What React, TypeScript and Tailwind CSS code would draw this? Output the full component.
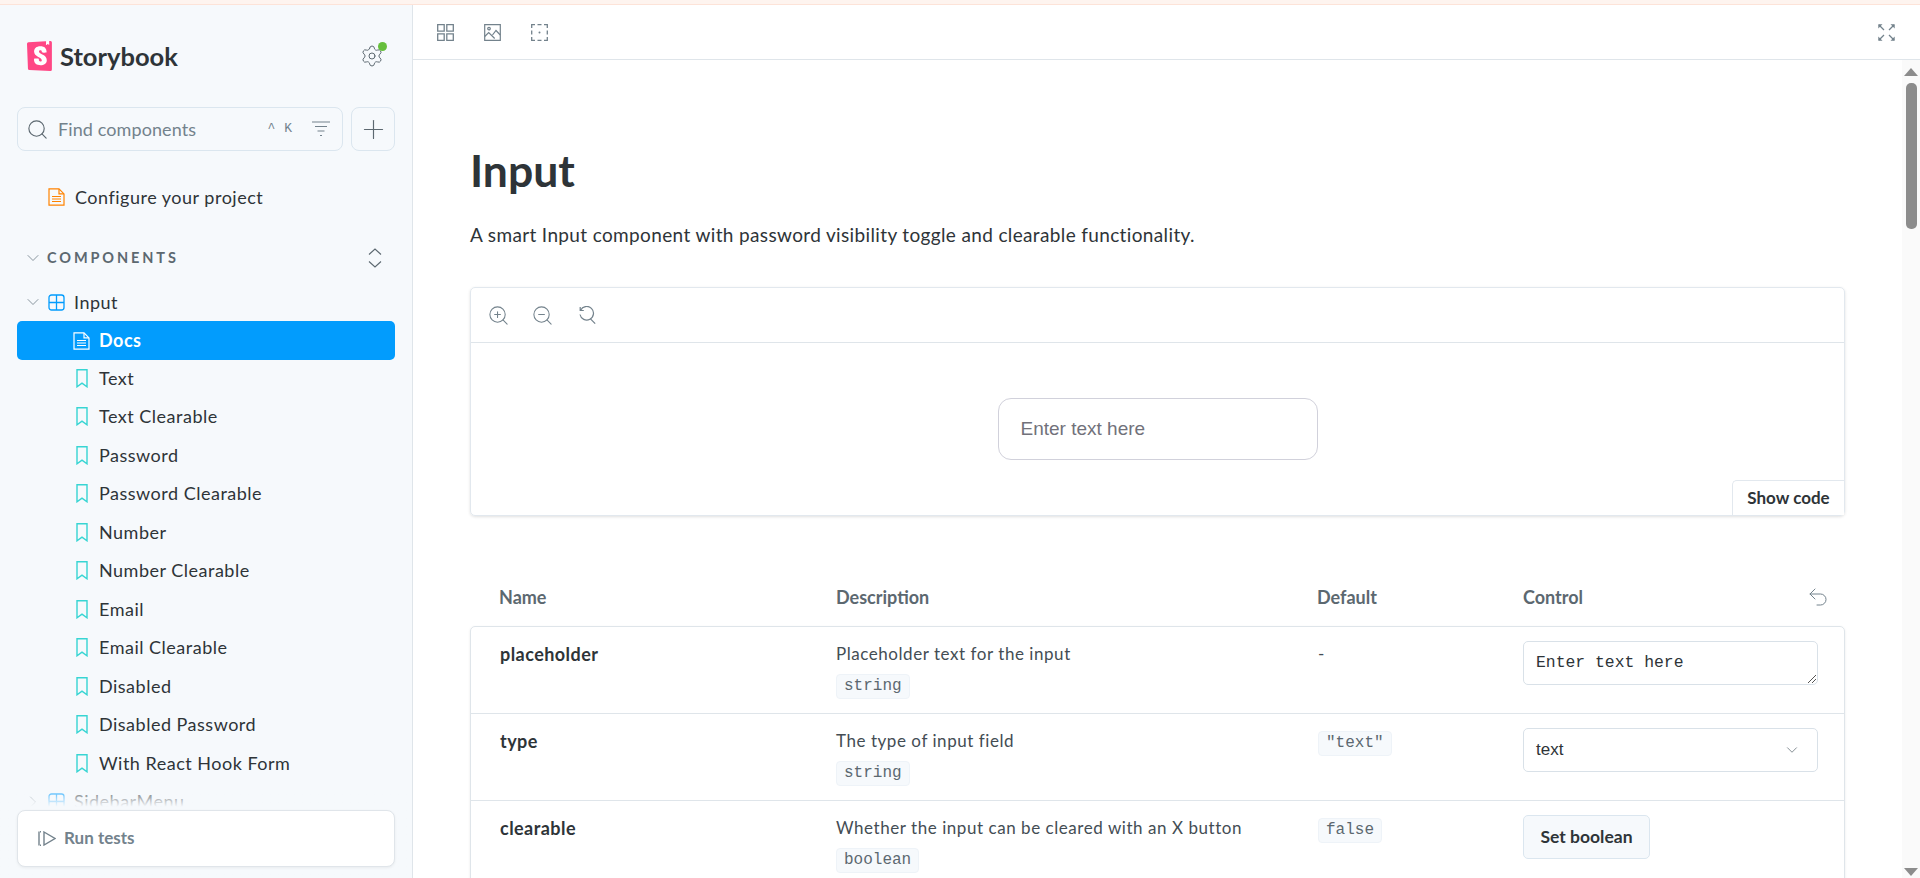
import React from "react";
import { ChevronDown, ChevronRight, Plus, Search, Settings, Undo2, ZoomIn, ZoomOut } from "lucide-react";

const stories = [
  "Text",
  "Text Clearable",
  "Password",
  "Password Clearable",
  "Number",
  "Number Clearable",
  "Email",
  "Email Clearable",
  "Disabled",
  "Disabled Password",
  "With React Hook Form",
];

function Logo() {
  return (
    <svg viewBox="0 0 16.1 20" className="h-[30px] w-[25px] shrink-0" preserveAspectRatio="none">
      <path fill="#FF4785" d="M.62 18.43 0 1.92A1 1 0 0 1 .94.88L14.97 0a1 1 0 0 1 1.06 1v17.97a1 1 0 0 1-1.05 1L1.57 19.4a1 1 0 0 1-.95-.97Z" />
      <path fill="#fff" d="m12.2 2.44.1-2.36L14.25 0l.09 2.43a.15.15 0 0 1-.25.11l-.75-.59-.89.68a.15.15 0 0 1-.24-.13Zm-2.5 5.14c0 .39 2.6.2 2.95-.07 0-2.65-1.42-4.04-4.03-4.04-2.6 0-4.06 1.42-4.06 3.54 0 3.68 4.97 3.75 4.97 5.76 0 .56-.27.9-.87.9-.79 0-1.1-.4-1.06-1.77 0-.3-2.98-.39-3.07 0-.23 3.32 1.83 4.28 4.17 4.28 2.27 0 4.05-1.21 4.05-3.4 0-3.9-5.05-3.8-5.05-5.73 0-.78.58-.88.92-.88.36 0 1.01.06.96 1.41Z" />
    </svg>
  );
}

function DocIcon({ className }: { className: string }) {
  return (
    <svg viewBox="0 0 17 18" fill="none" stroke="currentColor" strokeWidth="1.2" className={className}>
      <path d="M1 .9h10l5 5v11.2H1z" />
      <path d="M11 .9v5h5M4 8.5h9M4 11h9M4 13.5h9" />
    </svg>
  );
}

function ComponentIcon({ className = "" }: { className?: string }) {
  return (
    <svg viewBox="0 0 17 17" fill="none" stroke="#029cfd" strokeWidth="1.3" className={`h-[17px] w-[17px] shrink-0 ${className}`}>
      <rect x="1" y="1" width="15" height="15" rx="2.5" />
      <path d="M8.5 1v15M1 8.5h15" />
    </svg>
  );
}

function Bookmark() {
  return (
    <svg viewBox="0 0 12 19" fill="none" stroke="#37d5d3" strokeWidth="1.4" className="h-[19px] w-[12px] shrink-0">
      <path d="M1 .8h10v17l-5-3.6-5 3.6z" />
    </svg>
  );
}

function FilterIcon() {
  return (
    <svg viewBox="0 0 18 16" fill="none" stroke="#73828c" strokeWidth="1.2" className="h-4 w-[18px] shrink-0">
      <path d="M0 1h18M3 5.5h12M5.5 10h7M8 14.5h2" />
    </svg>
  );
}

function CollapseIcon() {
  return (
    <svg viewBox="0 0 14 20" fill="none" stroke="#5c6870" strokeWidth="1.1" className="h-5 w-[14px]">
      <path d="M1 6.5 7 1l6 5.5M1 13.5 7 19l6-5.5" />
    </svg>
  );
}

function GridIcon() {
  return (
    <svg viewBox="0 0 17 17" fill="none" stroke="#73828c" strokeWidth="1.3" className="h-[17px] w-[17px]">
      <path d="M.7.7h6.5v6.5H.7zM9.8.7h6.5v6.5H9.8zM.7 9.8h6.5v6.5H.7zM9.8 9.8h6.5v6.5H9.8z" />
    </svg>
  );
}

function ImageIcon() {
  return (
    <svg viewBox="0 0 17 17" fill="none" stroke="#73828c" strokeWidth="1.2" className="h-[17px] w-[17px]">
      <path d="M.7.7h15.6v15.6H.7z" />
      <circle cx="5" cy="4.6" r="1.3" />
      <path d="m.7 12.5 4-4 6 6M8.5 11l3.5-4.5 4.3 4.5" />
    </svg>
  );
}

function OutlineIcon() {
  return (
    <svg viewBox="0 0 17 17" fill="none" stroke="#73828c" strokeWidth="1.3" className="h-[17px] w-[17px]">
      <path d="M.7 4V.7H4M6.5.7h4M13 .7h3.3V4M16.3 6.5v4M16.3 13v3.3H13M10.5 16.3h-4M4 16.3H.7V13M.7 10.5v-4" />
      <circle cx="8.5" cy="8.5" r="1" fill="#73828c" stroke="none" />
    </svg>
  );
}

function FullscreenIcon() {
  return (
    <svg viewBox="0 0 17 17" fill="#73828c" stroke="#73828c" strokeWidth="1.3" className="h-[17px] w-[17px]">
      <path d="m1 1 5 5M16 1l-5 5M1 16l5-5M16 16l-5-5" fill="none" />
      <path d="M.3.3h4.2L.3 4.5zM16.7.3v4.2L12.5.3zM.3 16.7v-4.2l4.2 4.2zM16.7 16.7h-4.2l4.2-4.2z" stroke="none" />
    </svg>
  );
}

function ZoomResetIcon() {
  return (
    <svg viewBox="0 0 18 18" fill="none" stroke="#73828c" strokeWidth="1.2" className="h-[18px] w-[18px]">
      <path d="M2.6 4.2A6.8 6.8 0 1 1 2 8.5M2.2 .9v3.6h3.6M12.2 12.6l5 5" />
    </svg>
  );
}

function RunIcon() {
  return (
    <svg viewBox="0 0 18 15" fill="none" stroke="#73828c" strokeWidth="1.4" className="h-[15px] w-[18px] shrink-0">
      <path d="M1 .5v14M2 14.3h1M2 .7h1M6 1l11 6.5L6 14z" />
    </svg>
  );
}

function StoryRow({ label }: { label: string }) {
  return (
    <div className="flex h-[38.5px] items-center pl-[59px] text-[18px] tracking-[0.5px] text-[#2e3438]">
      <Bookmark />
      <span className="ml-[11px]">{label}</span>
    </div>
  );
}

function Sidebar() {
  return (
    <aside className="relative flex w-[413px] shrink-0 flex-col overflow-hidden border-r border-[#dfe5ea] bg-[#f6f9fc] px-[17px]">
      <div className="mt-[36px] flex h-[30px] items-center pl-[10px] pr-[11px]">
        <Logo />
        <span className="ml-[8px] text-[25.5px] font-bold text-[#2e3438]">Storybook</span>
        <div className="relative ml-auto">
          <Settings size={24} strokeWidth={1} className="text-[#5c6870]" />
          <span className="absolute -right-[3px] -top-[2px] h-[9px] w-[9px] rounded-full bg-[#66bf3c]" />
        </div>
      </div>

      <div className="mt-[36px] flex gap-[8px]">
        <div className="flex h-[44px] flex-1 items-center rounded-[8px] border border-[#dbe6ef] pl-[8px] pr-[12px]">
          <Search size={23} strokeWidth={1.2} className="shrink-0 text-[#5c6870]" />
          <span className="ml-[9px] text-[18px] tracking-[0.1px] text-[#73828c]">Find components</span>
          <span className="ml-auto font-['Liberation_Mono',monospace] text-[13px] text-[#73828c]">^</span>
          <span className="ml-[9px] mr-[20px] font-['Liberation_Mono',monospace] text-[13px] text-[#73828c]">K</span>
          <FilterIcon />
        </div>
        <div className="flex h-[44px] w-[44px] items-center justify-center rounded-[8px] border border-[#dbe6ef]">
          <Plus size={31} strokeWidth={0.9} className="text-[#5c6870]" />
        </div>
      </div>

      <div className="mt-[27px] flex h-[38px] items-center pl-[31px] text-[18px] tracking-[0.5px] text-[#2e3438]">
        <DocIcon className="h-[18px] w-[17px] shrink-0 text-[#ff8300]" />
        <span className="ml-[10px]">Configure your project</span>
      </div>

      <div className="mt-[23px] flex h-[38px] items-center pl-[6px] pr-[12px]">
        <ChevronDown size={20} strokeWidth={1} className="text-[#73828c]" />
        <span className="ml-[4px] text-[14.5px] font-bold tracking-[0.2em] text-[#5c6870]">COMPONENTS</span>
        <div className="ml-auto pr-[1px]">
          <CollapseIcon />
        </div>
      </div>

      <div className="mt-[6px] flex h-[38px] items-center pl-[6px] text-[18px] tracking-[0.5px] text-[#2e3438]">
        <ChevronDown size={20} strokeWidth={1} className="text-[#73828c]" />
        <ComponentIcon className="ml-[5px]" />
        <span className="ml-[9px]">Input</span>
      </div>

      <div className="flex h-[39px] items-center rounded-[5px] bg-[#029cfd] pl-[56px] text-[18px] font-bold tracking-[0.5px] text-white">
        <DocIcon className="h-[18px] w-[17px] shrink-0 text-white" />
        <span className="ml-[9px]">Docs</span>
      </div>

      <div className="-mt-[1px]">
        {stories.map((s) => (
          <StoryRow key={s} label={s} />
        ))}
      </div>

      <div className="flex h-[38px] items-center pl-[6px] text-[18px] tracking-[0.5px] text-[#2e3438]">
        <ChevronRight size={20} strokeWidth={1} className="text-[#73828c]" />
        <ComponentIcon className="ml-[5px]" />
        <span className="ml-[9px]">SidebarMenu</span>
      </div>

      {/* fade + test module card sit over the tree */}
      <div className="absolute inset-x-0 bottom-0 h-[95px] bg-gradient-to-b from-[#f6f9fc00] to-[#f6f9fc] to-[25%]">
        <div className="absolute bottom-[11px] left-[17px] right-[17px] flex h-[57px] items-center rounded-[8px] border border-[#e0e5ea] bg-white pb-[1px] pl-[20px] shadow-[0_1px_3px_rgba(0,0,0,0.06)]">
          <RunIcon />
          <span className="ml-[8px] pb-[1px] text-[17px] font-bold text-[#73828c]">Run tests</span>
        </div>
      </div>
    </aside>
  );
}

function Toolbar() {
  return (
    <div className="flex h-[55px] shrink-0 items-center border-b border-[#dfe5ea] bg-white pl-[24px] pr-[25px]">
      <div className="flex gap-[30px]">
        <GridIcon />
        <ImageIcon />
        <OutlineIcon />
      </div>
      <div className="ml-auto">
        <FullscreenIcon />
      </div>
    </div>
  );
}

function Code({ children }: { children: React.ReactNode }) {
  return (
    <span className="inline-block h-[25px] rounded-[4px] border border-[#eef3f8] bg-[#f6f9fc] px-[7px] font-['Liberation_Mono',monospace] text-[16px] leading-[23px] tracking-normal text-[#5c6870]">
      {children}
    </span>
  );
}

function PropRow({
  name,
  desc,
  type,
  def,
  control,
}: {
  name: string;
  desc: string;
  type: string;
  def: React.ReactNode;
  control: React.ReactNode;
}) {
  return (
    <div className="grid h-[87px] grid-cols-[336px_482px_205px_1fr] border-b border-[#dfe5ea] pl-[29px] pr-[26px] pt-[14px]">
      <span className="text-[18px] font-bold leading-[26px] tracking-[0.45px] text-[#2e3438]">{name}</span>
      <div className="flex flex-col items-start">
        <span className="text-[17px] leading-[26px] tracking-[0.55px] text-[#444d54]">{desc}</span>
        <div className="mt-[7px] leading-none">
          <Code>{type}</Code>
        </div>
      </div>
      <div className="text-[17px] leading-[26px] text-[#444d54]">{def}</div>
      {control}
    </div>
  );
}

function Docs() {
  return (
    <div className="min-w-0 flex-1 px-[57px] pt-[83px]">
      <h1 className="text-[44.5px] font-bold leading-[54px] text-[#2e3438]">Input</h1>
      <p className="mt-[25px] text-[19px] leading-[26px] tracking-[0.36px] text-[#2e3438]">
        A smart Input component with password visibility toggle and clearable functionality.
      </p>

      <div className="relative mt-[39px] h-[229px] rounded-[5px] border border-[#e2e8ee] shadow-[0_1px_3px_rgba(0,0,0,0.12)]">
        <div className="flex h-[55px] items-center gap-[21px] border-b border-[#dfe5ea] pl-[16px]">
          <ZoomIn size={23} strokeWidth={1.1} className="text-[#73828c]" />
          <ZoomOut size={23} strokeWidth={1.1} className="text-[#73828c]" />
          <div className="flex w-[23px] justify-center">
            <ZoomResetIcon />
          </div>
        </div>
        <div className="flex justify-center pt-[55px]">
          <div className="flex h-[62px] w-[320px] items-center rounded-[13px] border border-[#d1d1db] pl-[22px] font-['Liberation_Sans',sans-serif] text-[19px] text-[#71717a]">
            Enter text here
          </div>
        </div>
        <button className="absolute bottom-0 right-0 flex h-[35px] w-[112px] items-center justify-center rounded-tl-[5px] border-l border-t border-[#e2e8ee] bg-white text-[17px] font-bold text-[#2e3438]">
          Show code
        </button>
      </div>

      <div className="mt-[58px] grid h-[46px] grid-cols-[337px_481px_206px_1fr] items-center pl-[29px] pr-[26px] text-[18px] font-bold text-[#5c6870]">
        <span>Name</span>
        <span>Description</span>
        <span>Default</span>
        <div className="flex items-center justify-between">
          <span>Control</span>
          <Undo2 size={24} strokeWidth={1} className="-mr-[11px] text-[#73828c]" />
        </div>
      </div>

      <div className="mt-[6px] rounded-t-[5px] border border-[#dfe5ea] shadow-[0_1px_3px_rgba(0,0,0,0.08)]">
        <PropRow
          name="placeholder"
          desc="Placeholder text for the input"
          type="string"
          def="-"
          control={
            <div className="relative h-[44px] rounded-[5px] border border-[#d9e1e8] pl-[12px] pt-[11px] font-['Liberation_Mono',monospace] text-[16.4px] leading-[20px] text-[#2e3438]">
              Enter text here
              <svg viewBox="0 0 8 8" stroke="#555" strokeWidth="1" className="absolute bottom-[1px] right-[1px] h-2 w-2">
                <path d="M0 8 8 0M4 8l4-4" />
              </svg>
            </div>
          }
        />
        <PropRow
          name="type"
          desc="The type of input field"
          type="string"
          def={<Code>"text"</Code>}
          control={
            <div className="flex h-[44px] items-center justify-between rounded-[5px] border border-[#d9e1e8] pl-[12px] pr-[16px] font-['Liberation_Sans',sans-serif] text-[17px] text-[#2e3438]">
              text
              <ChevronDown size={18} strokeWidth={1} className="text-[#5c6870]" />
            </div>
          }
        />
        <PropRow
          name="clearable"
          desc="Whether the input can be cleared with an X button"
          type="boolean"
          def={<Code>false</Code>}
          control={
            <div>
              <button className="flex h-[44px] w-[127px] items-center justify-center rounded-[5px] border border-[#dbe6ef] bg-[#f6f9fc] text-[17.5px] font-bold text-[#2e3438]">
                Set boolean
              </button>
            </div>
          }
        />
      </div>
    </div>
  );
}

function Scrollbar() {
  return (
    <div className="flex w-[18px] shrink-0 flex-col items-center bg-[#fafafa] pb-[2px] pt-[8px]">
      <svg viewBox="0 0 14 8" fill="#8c8c8c" className="h-[8px] w-[14px]">
        <path d="M7 0l7 8H0z" />
      </svg>
      <div className="mt-[7px] h-[146px] w-[11px] rounded-[5px] bg-[#8c8c8c]" />
      <svg viewBox="0 0 14 8" fill="#8c8c8c" className="mt-auto h-[8px] w-[14px]">
        <path d="M7 8l7-8H0z" />
      </svg>
    </div>
  );
}

export default function App() {
  return (
    <div className="flex h-screen flex-col overflow-hidden bg-white font-['Lato',sans-serif]">
      <div className="h-[5px] shrink-0 border-b border-[#fde3d8] bg-[#fef4ef]" />
      <div className="flex min-h-0 flex-1">
        <Sidebar />
        <main className="flex min-w-0 flex-1 flex-col">
          <Toolbar />
          <div className="flex min-h-0 flex-1">
            <div className="flex min-w-0 flex-1 overflow-hidden">
              <Docs />
            </div>
            <Scrollbar />
          </div>
        </main>
      </div>
    </div>
  );
}
